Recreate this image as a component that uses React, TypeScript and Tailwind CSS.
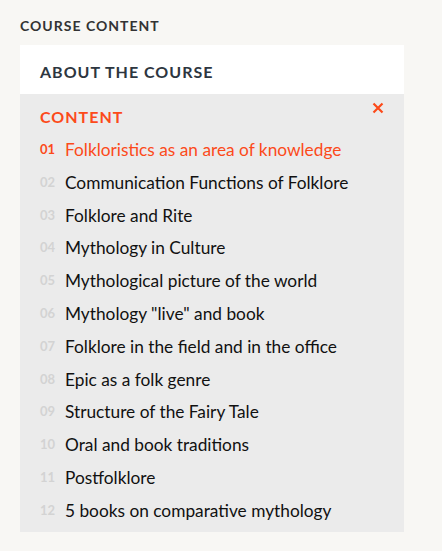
import React from "react";

const items = [
  "Folkloristics as an area of knowledge",
  "Communication Functions of Folklore",
  "Folklore and Rite",
  "Mythology in Culture",
  "Mythological picture of the world",
  'Mythology "live" and book',
  "Folklore in the field and in the office",
  "Epic as a folk genre",
  "Structure of the Fairy Tale",
  "Oral and book traditions",
  "Postfolklore",
  "5 books on comparative mythology",
];

export default function App() {
  return (
    <div
      className="w-[442px] h-[551px] bg-[#f8f7f4] pt-[17px] pl-[20px]"
      style={{ fontFamily: "Lato, 'Liberation Sans', sans-serif" }}
    >
      <div className="text-[14px] font-bold tracking-[1px] text-[#333333] leading-[17px]">
        COURSE CONTENT
      </div>
      <div className="mt-[11px] w-[384px]">
        <div className="bg-white h-[49px] pl-[20px] flex items-center">
          <span className="text-[16px] font-bold tracking-[1px] text-[#2d3640] pt-[5px]">
            ABOUT THE COURSE
          </span>
        </div>
        <div className="bg-[#ebebeb] relative pl-[20px] pt-[12px] pb-[4px]">
          <div className="text-[16px] font-bold tracking-[1px] text-[#fc4a1a] leading-[22px]">
            CONTENT
          </div>
          <button className="absolute right-[20px] top-[8px] text-[#fc4a1a]">
            <svg width="12" height="12" viewBox="0 0 12 12">
              <path d="M1.5 1.5 L10.5 10.5 M10.5 1.5 L1.5 10.5" stroke="currentColor" strokeWidth="2.2" />
            </svg>
          </button>
          <ul className="mt-[6px]">
            {items.map((t, i) => (
              <li key={i} className="flex items-baseline h-[32.8px]">
                <span
                  className={
                    "w-[25px] text-[13px] font-bold relative -top-[2px] " +
                    (i === 0 ? "text-[#fc4a1a]" : "text-[#d3d3d3]")
                  }
                >
                  {String(i + 1).padStart(2, "0")}
                </span>
                <span
                  className={
                    "text-[17.3px] leading-[32.8px] " +
                    (i === 0 ? "text-[#fc4a1a]" : "text-[#111111]")
                  }
                >
                  {t}
                </span>
              </li>
            ))}
          </ul>
        </div>
      </div>
    </div>
  );
}
